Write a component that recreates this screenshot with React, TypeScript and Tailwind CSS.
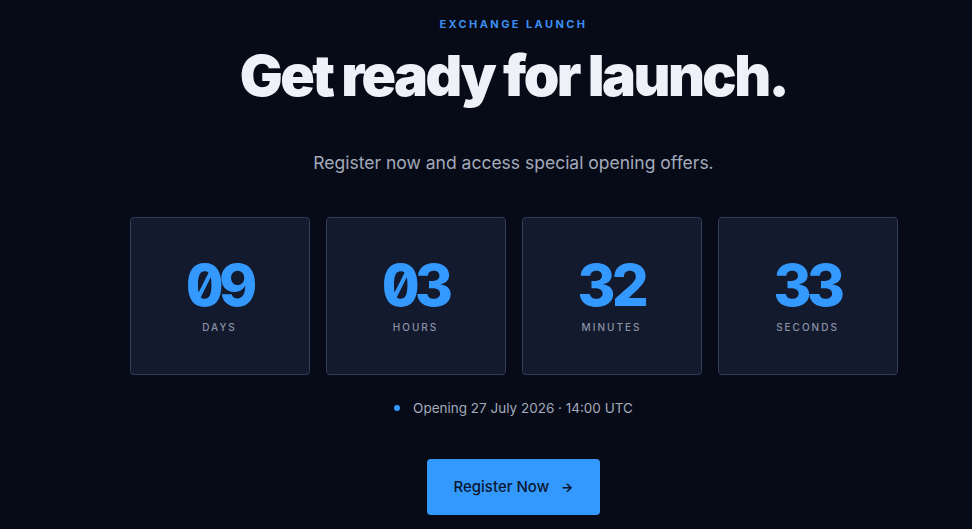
import React from "react";

const units = [
  { value: "09", label: "DAYS" },
  { value: "03", label: "HOURS" },
  { value: "32", label: "MINUTES" },
  { value: "33", label: "SECONDS" },
];

export default function App() {
  return (
    <div
      className="min-h-[529px] w-full bg-[#070a17] pl-[55px] overflow-hidden"
      style={{ fontFamily: "Inter, 'Noto Sans', sans-serif" }}
    >
      <div className="flex flex-col items-center pt-[17px]">
        <div className="text-[11px] font-bold tracking-[0.22em] text-[#3b8ff0] leading-[14px]">
          EXCHANGE LAUNCH
        </div>
        <h1 className="mt-[10px] text-[57px] leading-[70px] font-black tracking-[-0.045em] text-[#eef1f7]">
          Get ready for launch.
        </h1>
        <p className="mt-[40px] text-[17.5px] leading-[24px] text-[#a3abbb]">
          Register now and access special opening offers.
        </p>
        <div className="mt-[42px] flex gap-[16px]">
          {units.map((u) => (
            <div
              key={u.label}
              className="flex h-[158px] w-[180px] flex-col items-center rounded-[4px] border border-[#333c57] bg-[#141a2e]"
            >
              <div className="mt-[37px] text-[58px] leading-[60px] font-extrabold tracking-[-0.07em] text-[#3399ff] slashed-zero tabular-nums">
                {u.value}
              </div>
              <div className="mt-[5px] text-[10px] font-medium tracking-[0.2em] text-[#8a93a6]">
                {u.label}
              </div>
            </div>
          ))}
        </div>
        <div className="mt-[23px] flex items-center gap-[13px] text-[13.5px] text-[#a3abbb]">
          <span className="h-[6px] w-[6px] rounded-full bg-[#3399ff]" />
          <span>Opening 27 July 2026 · 14:00 UTC</span>
        </div>
        <button className="mt-[41px] flex h-[56px] w-[173px] items-center justify-center gap-[12px] rounded-[4px] bg-[#3399ff] text-[15px] font-medium text-[#0b1630]">
          <span>Register Now</span>
          <span className="text-[13px] font-bold">→</span>
        </button>
      </div>
    </div>
  );
}
